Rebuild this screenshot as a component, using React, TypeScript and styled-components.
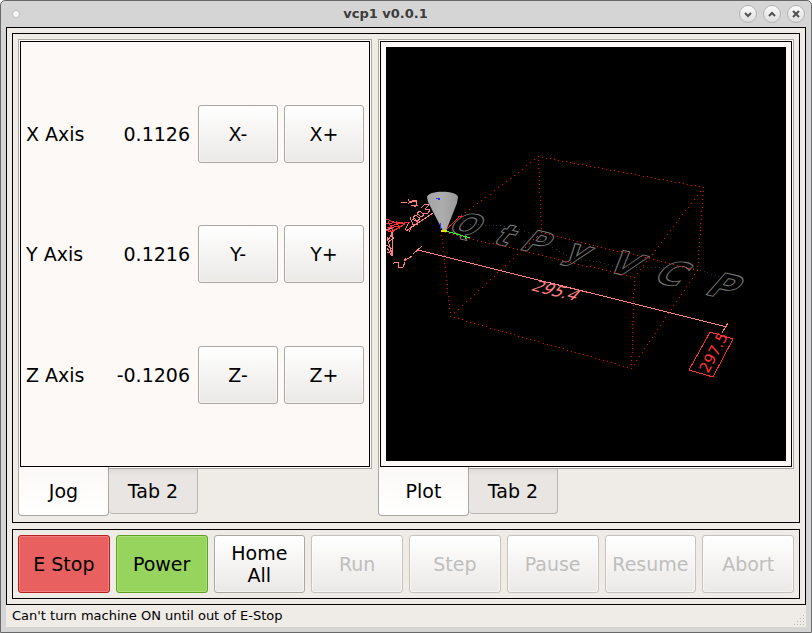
import React, { useState } from "react";
import styled, { createGlobalStyle } from "styled-components";

const GlobalStyle = createGlobalStyle`
  *, *::before, *::after { box-sizing: border-box; }
  body {
    margin: 0;
    background: #fff;
    color: #000;
    font-family: "DejaVu Sans", sans-serif;
    font-size: 19px;
    line-height: 22px;
  }
  button { font: inherit; color: inherit; margin: 0; padding: 0; }
`;

const Window = styled.div`
  display: flex;
  flex-direction: column;
  min-height: 100vh;
  border: 1px solid #686868;
  border-radius: 5px 5px 0 0;
  background: #d5d5d5;
`;

const TitleBar = styled.header`
  display: grid;
  grid-template-columns: auto 1fr auto;
  align-items: center;
  height: 26px;
  padding: 0 6px 0 11px;
`;

const MenuDot = styled.button`
  width: 8px;
  height: 8px;
  border: 1px solid #bdbdbd;
  border-radius: 50%;
  background: #fafafa;
`;

const Title = styled.h1`
  margin: 0;
  padding-left: 12px;
  text-align: center;
  font-size: 13px;
  font-weight: bold;
  line-height: 16px;
  color: #3c3c3c;
`;

const WindowButtons = styled.div`
  display: flex;
  justify-content: flex-end;
  gap: 6px;
`;

const RoundButton = styled.button`
  display: grid;
  place-items: center;
  width: 18px;
  height: 18px;
  border: 1px solid #b4b4b4;
  border-radius: 50%;
  background: linear-gradient(#fafafa, #dedede);
`;

const Content = styled.main`
  flex: 1;
  display: flex;
  flex-direction: column;
  margin: 0 5px 5px;
  background: #efebe7;
`;

const Frame = styled.div<{ $grow?: boolean }>`
  flex: ${(p) => (p.$grow ? "1" : "none")};
  display: flex;
  flex-direction: column;
  gap: 6px;
  padding: 5px;
  border: 1px solid #000;
  background: #efebe7;
`;

const Columns = styled.div`
  flex: 1;
  display: grid;
  grid-template-columns: 354fr 416fr;
  gap: 6px;
`;

const TabWidget = styled.section`
  display: flex;
  flex-direction: column;
  min-width: 0;
`;

const TabPane = styled.div`
  flex: 1;
  display: flex;
  padding: 1px;
  border: 1px solid #aba8a4;
  background: #fdfaf7;
`;

const Panel = styled.div<{ $plot?: boolean }>`
  flex: 1;
  display: flex;
  flex-direction: column;
  justify-content: space-evenly;
  min-width: 0;
  padding: ${(p) => (p.$plot ? "5px" : "0 5px")};
  border: 1px solid #000;
  background: #fdf9f6;
`;

const TabBar = styled.div`
  display: flex;
  align-items: flex-start;
  height: 48px;
`;

const Tab = styled.button<{ $active: boolean }>`
  width: ${(p) => (p.$active ? 91 : 89)}px;
  height: ${(p) => (p.$active ? 49 : 45)}px;
  margin-top: ${(p) => (p.$active ? -2 : 0)}px;
  border: 1px solid ${(p) => (p.$active ? "#aba8a4" : "#b9b5b2")};
  border-top: none;
  border-left-width: ${(p) => (p.$active ? 1 : 0)}px;
  border-radius: 0 0 4px 4px;
  background: ${(p) =>
    p.$active
      ? "linear-gradient(#fbf9f6, #ffffff)"
      : "linear-gradient(#dedad7, #e9e5e2 6px)"};
`;

const AxisRow = styled.div`
  display: grid;
  grid-template-columns: auto 1fr 80px 80px;
  gap: 6px;
  align-items: center;
`;

const AxisName = styled.span`
  white-space: nowrap;
`;

const AxisValue = styled.output`
  padding-right: 2px;
  text-align: right;
`;

type Tone = "plain" | "red" | "green";

const tones: Record<Tone, { border: string; fill: string; glow: string }> = {
  plain: { border: "#aba8a4", fill: "linear-gradient(#ffffff, #ebe9e6)", glow: "#ffffff80" },
  red: { border: "#b3201f", fill: "#e86060", glow: "#ee8080" },
  green: { border: "#60a01f", fill: "#97d45d", glow: "#abdf7c" },
};

const PushButton = styled.button<{ $tone?: Tone }>`
  height: 58px;
  min-width: 0;
  border: 1px solid ${(p) => tones[p.$tone ?? "plain"].border};
  border-radius: 3px;
  background: ${(p) => tones[p.$tone ?? "plain"].fill};
  box-shadow: inset 0 0 0 1px ${(p) => tones[p.$tone ?? "plain"].glow};
  white-space: pre-line;

  &:disabled {
    color: #bebebe;
    border-color: #c5c2bf;
  }
`;

const CommandRow = styled.div`
  display: grid;
  grid-template-columns: repeat(8, minmax(0, 1fr));
  gap: 6px;
`;

const StatusBar = styled.footer`
  display: flex;
  align-items: center;
  justify-content: space-between;
  height: 22px;
  padding: 0 1px 0 6px;
  font-size: 13px;
  line-height: 16px;
`;

const Grip = styled.svg`
  align-self: flex-end;
  margin-bottom: 1px;
`;

const PlotView = styled.svg`
  flex: 1;
  display: block;
  width: 100%;
  min-height: 0;
  background: #000;
`;

const Glyph = ({ d }: { d: string }) => (
  <svg width="10" height="10" viewBox="0 0 10 10" fill="none" stroke="#505050" strokeWidth="2">
    <path d={d} />
  </svg>
);

type Point = [number, number];

const dotted = (points: Point[]) => {
  let d = "";
  for (let i = 1; i < points.length; i++) {
    const [x0, y0] = points[i - 1];
    const [x1, y1] = points[i];
    const span = Math.max(Math.abs(x1 - x0), Math.abs(y1 - y0));
    const n = Math.max(1, Math.round(span / 4));
    for (let k = 0; k < n; k++) {
      const x = Math.round(x0 + ((x1 - x0) * k) / n);
      const y = Math.round(y0 + ((y1 - y0) * k) / n);
      d += `M${x} ${y}h1v1h-1z`;
    }
  }
  return d;
};

/* Machine envelope corners, in projected plot coordinates. */
const top: Point = [538, 156];
const topRight: Point = [703, 187];
const origin: Point = [441, 231];
const front: Point = [634, 277];
const back: Point = [541, 232];
const right: Point = [697, 270];
const left: Point = [450, 316];
const bottom: Point = [631, 368];

const envelope: Point[][] = [
  [top, topRight, front, origin, top, back, right, bottom, left, back],
  [topRight, right],
  [front, bottom],
  [origin, left],
];

const rapids: Point[] = [
  [470, 224], [500, 225], [515, 227], [532, 234], [552, 247], [570, 257],
  [600, 262], [620, 267], [690, 267], [700, 270], [722, 277],
];

const letters = [
  { ch: "Q", x: 446, y: 231, size: 32 },
  { ch: "t", x: 491, y: 243, size: 32 },
  { ch: "P", x: 518, y: 249, size: 32 },
  { ch: "y", x: 562, y: 258, size: 32 },
  { ch: "V", x: 605, y: 271, size: 34 },
  { ch: "C", x: 651, y: 281, size: 36 },
  { ch: "P", x: 703, y: 294, size: 36 },
];

const Toolpath = () => (
  <PlotView viewBox="386 47 400 414" role="img" aria-label="Toolpath plot">
    <defs>
      <linearGradient id="cone">
        <stop offset="0" stopColor="#a4a4a4" />
        <stop offset="0.5" stopColor="#adadad" />
        <stop offset="1" stopColor="#999" />
      </linearGradient>
    </defs>
    <path d={dotted(rapids)} fill="#263636" shapeRendering="crispEdges" />
    <g fill="none" stroke="#787878" strokeWidth="1" fontWeight="bold">
      {letters.map((l, i) => (
        <text key={i} fontSize={l.size} transform={`translate(${l.x} ${l.y}) skewY(13) skewX(-36)`}>
          {l.ch}
        </text>
      ))}
    </g>
    <path d={envelope.map(dotted).join("")} fill="#f00" shapeRendering="crispEdges" />
    <g fill="none" stroke="#ff8080" shapeRendering="crispEdges">
      <path d="M418 250L727 327M422 246L413 254M728 323L722 333" />
      <path d="M406 231L433 213M412 226l-3 6" />
      <path d="M401 203l6-1M408 199l2 4 7-3M408 204l3-3 6 1-1 4-5-1M412 200l4 0M418 205l-4 2" />
      <path d="M421 208l4-4 4 1-4 4 5 1-2 3-4 0M430 206l3-3M419 211l5 3-2 3-5-3zM415 215l5 3-2 3-5-3zM412 219l6 3-1 3-4-1M410 217l3 8M405 230l4-8" />
      <path d="M386 230l7-2-2 8 3 2-6 4M387 237l5 18M392 233v23M386 245l7 4M387 253l6-3M388 240l5-8M387 248l5 8" />
      <path d="M393 264l2-2 3 0 0 5 5 0 2-5M404 261l8-5M404 261l2-3" />
    </g>
    <g fill="none" stroke="#ff3030" shapeRendering="crispEdges">
      <path d="M386 219l13 5 11-2M386 224l12-2 7 2-14 8-5-2M387 228l14-2-9 6-5-5M396 221l4 8M388 221l5 9M391 226l12-4" />
      <path d="M710 332L733 339L713 377L689 370z" />
    </g>
    <text fontSize="16" fill="#ff8080" transform="translate(530 290) rotate(14) skewX(-28)">
      295.4
    </text>
    <text fontSize="15" fill="#ff3030" transform="translate(708 374) rotate(-62)">
      297.5
    </text>
    <path d="M427 197C428 190 457 190 458 197L457 203L446 231H443L428 202z" fill="url(#cone)" />
    <g fill="none" shapeRendering="crispEdges">
      <path d="M436 198h4M438 199h2M440 223v6" stroke="#3333ff" />
      <path d="M447 229L459 217M458 216h5" stroke="#ff2020" />
      <path d="M446 231L470 238M465 236v3" stroke="#20ff20" />
      <path d="M441 231h6" stroke="#e8e800" strokeWidth="2" />
    </g>
  </PlotView>
);

const Tabs = ({ first, plot, children }: { first: string; plot?: boolean; children: React.ReactNode }) => {
  const [active, setActive] = useState(0);
  return (
    <TabWidget>
      <TabPane role="tabpanel" aria-label={active === 0 ? first : "Tab 2"}>
        <Panel $plot={plot}>{active === 0 && children}</Panel>
      </TabPane>
      <TabBar role="tablist">
        {[first, "Tab 2"].map((name, i) => (
          <Tab key={name} role="tab" aria-selected={active === i} $active={active === i} onClick={() => setActive(i)}>
            {name}
          </Tab>
        ))}
      </TabBar>
    </TabWidget>
  );
};

const axes = [
  { axis: "X", value: "0.1126" },
  { axis: "Y", value: "0.1216" },
  { axis: "Z", value: "-0.1206" },
];

const commands: { label: string; tone?: Tone; disabled?: boolean }[] = [
  { label: "E Stop", tone: "red" },
  { label: "Power", tone: "green" },
  { label: "Home\nAll" },
  { label: "Run", disabled: true },
  { label: "Step", disabled: true },
  { label: "Pause", disabled: true },
  { label: "Resume", disabled: true },
  { label: "Abort", disabled: true },
];

export default function App() {
  return (
    <>
      <GlobalStyle />
      <Window>
        <TitleBar>
          <MenuDot aria-label="Window menu" />
          <Title>vcp1 v0.0.1</Title>
          <WindowButtons>
            <RoundButton aria-label="Minimize"><Glyph d="M2 4l3 3 3-3" /></RoundButton>
            <RoundButton aria-label="Maximize"><Glyph d="M2 7l3-3 3 3" /></RoundButton>
            <RoundButton aria-label="Close"><Glyph d="M2 2l6 6M8 2l-6 6" /></RoundButton>
          </WindowButtons>
        </TitleBar>
        <Content>
          <Frame $grow>
            <Frame $grow>
              <Columns>
                <Tabs first="Jog">
                  {axes.map(({ axis, value }) => (
                    <AxisRow key={axis}>
                      <AxisName>{axis} Axis</AxisName>
                      <AxisValue aria-label={`${axis} position`}>{value}</AxisValue>
                      <PushButton>{axis}-</PushButton>
                      <PushButton>{axis}+</PushButton>
                    </AxisRow>
                  ))}
                </Tabs>
                <Tabs first="Plot" plot>
                  <Toolpath />
                </Tabs>
              </Columns>
            </Frame>
            <Frame>
              <CommandRow>
                {commands.map((c) => (
                  <PushButton key={c.label} $tone={c.tone} disabled={c.disabled}>
                    {c.label}
                  </PushButton>
                ))}
              </CommandRow>
            </Frame>
          </Frame>
          <StatusBar>
            <span role="status">Can't turn machine ON until out of E-Stop</span>
            <Grip width="12" height="12" viewBox="0 0 12 12" fill="#bab6b2" shapeRendering="crispEdges" aria-hidden="true">
              <path d="M10 1h1v1h-1zM7 4h1v1h-1zM10 4h1v1h-1zM4 7h1v1h-1zM7 7h1v1h-1zM10 7h1v1h-1zM1 10h1v1h-1zM4 10h1v1h-1zM7 10h1v1h-1zM10 10h1v1h-1z" />
            </Grip>
          </StatusBar>
        </Content>
      </Window>
    </>
  );
}
